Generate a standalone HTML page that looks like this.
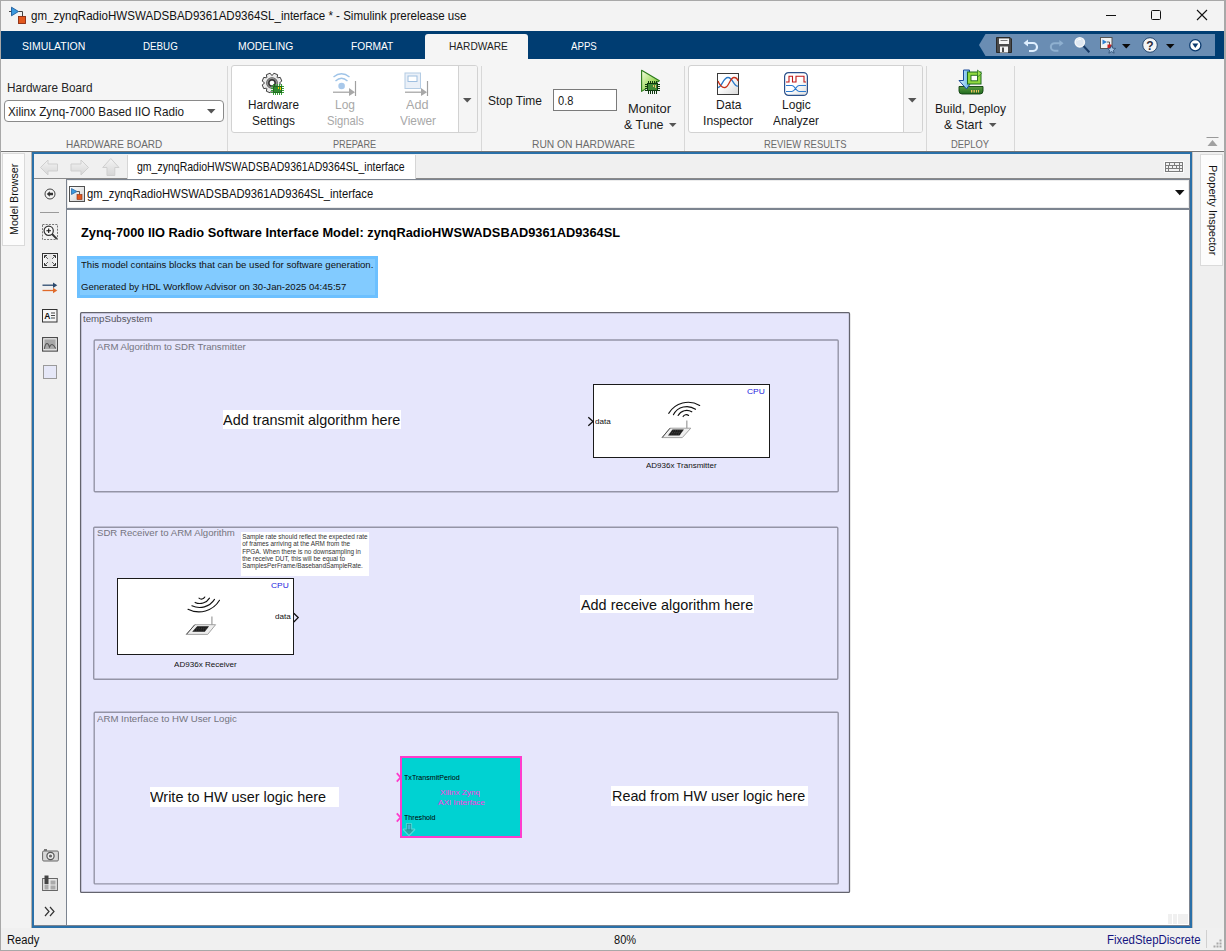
<!DOCTYPE html>
<html><head><meta charset="utf-8">
<style>
*{margin:0;padding:0;box-sizing:border-box}
html,body{width:1226px;height:951px;overflow:hidden}
body{position:relative;background:#f0f0f0;font-family:"Liberation Sans",sans-serif;color:#000}
.a{position:absolute}
.t{position:absolute;white-space:nowrap;line-height:1}
svg{position:absolute;overflow:visible}
</style></head><body>
<div class="a" style="left:0;top:0;width:1226px;height:951px;background:#f0f0f0"></div>
<div class="a" style="left:0;top:0;width:1226px;height:31px;background:#f3f3f3"></div>
<svg style="left:8px;top:6px" width="20" height="20" viewBox="0 0 20 20">
  <path d="M1 5.5 H4" stroke="#444" stroke-width="1"/>
  <path d="M3.5 1.2 L10.5 5.5 L3.5 9.8 Z" fill="#3a9ae0" stroke="#1d5a9a" stroke-width="0.9"/>
  <path d="M10.5 5.5 H14.5 V10.5" stroke="#444" stroke-width="1" fill="none"/>
  <rect x="10.5" y="10.5" width="7" height="7" fill="#e2581e" stroke="#8a2a10" stroke-width="0.9"/>
</svg>
<div class="t" style="left:31.27px;top:9.00px;font-size:13.2px;color:#111;font-weight:normal;font-family:'Liberation Sans';transform:scaleX(0.8757);transform-origin:0 0;">gm_zynqRadioHWSWADSBAD9361AD9364SL_interface * - Simulink prerelease use</div>
<div class="a" style="left:1106px;top:15px;width:10px;height:1px;background:#111"></div>
<div class="a" style="left:1151px;top:10px;width:10px;height:10px;border:1px solid #111;border-radius:1.5px"></div>
<svg style="left:1197px;top:10px" width="10" height="10" viewBox="0 0 10 10"><path d="M0 0 L10 10 M10 0 L0 10" stroke="#111" stroke-width="1.1"/></svg>
<div class="a" style="left:1px;top:31px;width:1224px;height:28px;background:#003d72"></div>
<div class="t" style="left:22.35px;top:41.00px;font-size:11.2px;color:#fff;font-weight:normal;font-family:'Liberation Sans';transform:scaleX(0.9377);transform-origin:0 0;">SIMULATION</div>
<div class="t" style="left:142.55px;top:41.00px;font-size:11.2px;color:#fff;font-weight:normal;font-family:'Liberation Sans';transform:scaleX(0.8740);transform-origin:0 0;">DEBUG</div>
<div class="t" style="left:238.05px;top:41.00px;font-size:11.2px;color:#fff;font-weight:normal;font-family:'Liberation Sans';transform:scaleX(0.9270);transform-origin:0 0;">MODELING</div>
<div class="t" style="left:350.55px;top:41.00px;font-size:11.2px;color:#fff;font-weight:normal;font-family:'Liberation Sans';transform:scaleX(0.9119);transform-origin:0 0;">FORMAT</div>
<div class="t" style="left:571.15px;top:41.00px;font-size:11.2px;color:#fff;font-weight:normal;font-family:'Liberation Sans';transform:scaleX(0.8632);transform-origin:0 0;">APPS</div>
<div class="a" style="left:425px;top:34px;width:103px;height:25px;background:#f5f5f5;border-radius:3px 3px 0 0"></div>
<div class="t" style="left:448.55px;top:41.00px;font-size:11.2px;color:#222;font-weight:normal;font-family:'Liberation Sans';transform:scaleX(0.9068);transform-origin:0 0;">HARDWARE</div>
<svg style="left:979px;top:34px" width="236" height="22" viewBox="0 0 236 22">
  <path d="M6.5 0 H236 V22 H6.5 L0 11 Z" fill="#6a8db3"/>
</svg>
<svg style="left:996px;top:37px" width="16" height="16" viewBox="0 0 16 16">
  <path d="M0.5 0.5 H14 L15.5 2 V15.5 H0.5 Z" fill="#4a4a4a" stroke="#2a2a2a" stroke-width="1"/>
  <rect x="3" y="1.5" width="10" height="5.5" fill="#f4f4f4"/>
  <rect x="4.5" y="3" width="7" height="1" fill="#777"/>
  <rect x="4" y="9.5" width="8" height="6" fill="#f4f4f4"/>
  <rect x="6" y="10.5" width="2" height="4.5" fill="#4a4a4a"/>
</svg>
<svg style="left:1023px;top:39px" width="16" height="13" viewBox="0 0 16 13">
  <path d="M3 4 H10 A4 4 0 0 1 10 12 H6" fill="none" stroke="#dfefff" stroke-width="2.2"/>
  <path d="M0.5 4 L5 0.5 V7.5 Z" fill="#dfefff"/>
</svg>
<svg style="left:1049px;top:39px" width="15" height="13" viewBox="0 0 16 13">
  <path d="M13 4 H6 A4 4 0 0 0 6 12 H10" fill="none" stroke="#8fb0d0" stroke-width="2.2"/>
  <path d="M15.5 4 L11 0.5 V7.5 Z" fill="#8fb0d0"/>
</svg>
<svg style="left:1073px;top:36px" width="18" height="18" viewBox="0 0 18 18">
  <path d="M10.3 9.8 L16.3 16.2" stroke="#173a66" stroke-width="2"/>
  <circle cx="6.8" cy="6.3" r="4.6" fill="#dfe8f2" stroke="#f4f6f8" stroke-width="1.6"/>
  <path d="M4.5 4.5 A3 3 0 0 1 8 3.5" stroke="#fff" stroke-width="1" fill="none"/>
</svg>
<svg style="left:1100px;top:37px" width="17" height="17" viewBox="0 0 17 17">
  <rect x="0.5" y="0.5" width="11.5" height="11" fill="#f2f2f2" stroke="#555" stroke-width="1"/>
  <path d="M2.5 2.5 L7 5 L2.5 7.5 Z" fill="#2f7fd0"/>
  <path d="M7 5 H9.5 V8" stroke="#333" stroke-width="0.8" fill="none"/>
  <rect x="7.5" y="7.5" width="4" height="4" fill="#d02020"/>
  <path d="M11.5 8.5 L12.7 11.2 L15.6 11.4 L13.4 13.3 L14.1 16.2 L11.5 14.6 L8.9 16.2 L9.6 13.3 L7.4 11.4 L10.3 11.2 Z" fill="#a8c8e8" stroke="#2a4a70" stroke-width="0.8"/>
</svg>
<svg style="left:1122px;top:43.5px" width="9" height="5" viewBox="0 0 9 5"><path d="M0 0 H8.5 L4.25 4.5 Z" fill="#0a0a0a"/></svg>
<svg style="left:1142px;top:37px" width="16" height="16" viewBox="0 0 16 16">
  <circle cx="8" cy="8" r="7.3" fill="#f4f4f4" stroke="#24466e" stroke-width="1"/>
  <text x="8" y="12.6" text-anchor="middle" font-family="Liberation Sans" font-weight="bold" font-size="12" fill="#2a2a3a">?</text>
</svg>
<svg style="left:1166px;top:43.5px" width="9" height="5" viewBox="0 0 9 5"><path d="M0 0 H8.5 L4.25 4.5 Z" fill="#0a0a0a"/></svg>
<svg style="left:1189px;top:38.5px" width="13" height="13" viewBox="0 0 13 13">
  <circle cx="6.3" cy="6.3" r="5.6" fill="#fff" stroke="#0b3a6e" stroke-width="1.3"/>
  <path d="M3.3 4.5 H9.3 L6.3 9 Z" fill="#0b3a6e"/>
</svg>
<div class="a" style="left:1px;top:59px;width:1224px;height:92px;background:#f5f5f5"></div>
<div class="a" style="left:1px;top:150px;width:1224px;height:1px;background:#fcfcfc"></div>
<div class="a" style="left:1px;top:151px;width:1224px;height:1px;background:#767676"></div>
<div class="a" style="left:227px;top:66px;width:1px;height:85px;background:#d8d8d8"></div>
<div class="a" style="left:481px;top:66px;width:1px;height:85px;background:#d8d8d8"></div>
<div class="a" style="left:684px;top:66px;width:1px;height:85px;background:#d8d8d8"></div>
<div class="a" style="left:926px;top:66px;width:1px;height:85px;background:#d8d8d8"></div>
<div class="a" style="left:1014px;top:66px;width:1px;height:85px;background:#d8d8d8"></div>
<div class="t" style="left:66.06px;top:139.00px;font-size:11px;color:#6b6b6b;font-weight:normal;font-family:'Liberation Sans';transform:scaleX(0.9090);transform-origin:0 0;">HARDWARE BOARD</div>
<div class="t" style="left:333.16px;top:139.00px;font-size:11px;color:#6b6b6b;font-weight:normal;font-family:'Liberation Sans';transform:scaleX(0.8332);transform-origin:0 0;">PREPARE</div>
<div class="t" style="left:531.56px;top:139.00px;font-size:11px;color:#6b6b6b;font-weight:normal;font-family:'Liberation Sans';transform:scaleX(0.9329);transform-origin:0 0;">RUN ON HARDWARE</div>
<div class="t" style="left:764.16px;top:139.00px;font-size:11px;color:#6b6b6b;font-weight:normal;font-family:'Liberation Sans';transform:scaleX(0.8566);transform-origin:0 0;">REVIEW RESULTS</div>
<div class="t" style="left:951.36px;top:139.00px;font-size:11px;color:#6b6b6b;font-weight:normal;font-family:'Liberation Sans';transform:scaleX(0.8546);transform-origin:0 0;">DEPLOY</div>
<div class="t" style="left:6.90px;top:82.00px;font-size:12.6px;color:#262626;font-weight:normal;font-family:'Liberation Sans';transform:scaleX(0.9328);transform-origin:0 0;">Hardware Board</div>
<div class="a" style="left:4px;top:100px;width:220px;height:22px;background:#fff;border:1px solid #8a8a8a;border-radius:4px"></div>
<div class="t" style="left:8.30px;top:106.00px;font-size:12.6px;color:#1a1a1a;font-weight:normal;font-family:'Liberation Sans';transform:scaleX(0.9284);transform-origin:0 0;">Xilinx Zynq-7000 Based IIO Radio</div>
<svg style="left:207px;top:109px" width="9" height="5" viewBox="0 0 9 5"><path d="M0 0 H8.5 L4.25 4.5 Z" fill="#555"/></svg>
<div class="a" style="left:231px;top:65px;width:247px;height:68px;background:#fff;border:1px solid #d2d2d2;border-radius:3px"></div>
<div class="a" style="left:458px;top:66px;width:19px;height:66px;background:#f5f5f5;border-left:1px solid #d2d2d2;border-radius:0 2px 2px 0"></div>
<svg style="left:463px;top:98px" width="9" height="5" viewBox="0 0 9 5"><path d="M0 0 H8.5 L4.25 4.5 Z" fill="#555"/></svg>
<svg style="left:262px;top:73px" width="20" height="20" viewBox="0 0 20 20">
  <defs><radialGradient id="gg" cx="50%" cy="50%" r="50%"><stop offset="0.3" stop-color="#777"/><stop offset="0.55" stop-color="#222"/><stop offset="0.8" stop-color="#999"/><stop offset="1" stop-color="#333"/></radialGradient></defs>
  <polygon points="10.25,2.40 11.92,0.19 15.59,1.71 15.20,4.45 15.55,4.80 18.29,4.41 19.81,8.08 17.60,9.75 17.60,10.25 19.81,11.92 18.29,15.59 15.55,15.20 15.20,15.55 15.59,18.29 11.92,19.81 10.25,17.60 9.75,17.60 8.08,19.81 4.41,18.29 4.80,15.55 4.45,15.20 1.71,15.59 0.19,11.92 2.40,10.25 2.40,9.75 0.19,8.08 1.71,4.41 4.45,4.80 4.80,4.45 4.41,1.71 8.08,0.19 9.75,2.40" fill="#ececec" stroke="#2a2a2a" stroke-width="0.9" stroke-linejoin="round"/>
  <circle cx="10" cy="10" r="5.8" fill="url(#gg)"/>
  <circle cx="10" cy="10" r="2.3" fill="#fff"/>
</svg>
<svg style="left:0;top:0" width="1" height="1">
  <g fill="#35a035">
  <rect x="273" y="84" width="1" height="2"/><rect x="275" y="84" width="1" height="2"/><rect x="277" y="84" width="1" height="2"/><rect x="279" y="84" width="1" height="2"/><rect x="281" y="84" width="1" height="2"/>
  <rect x="273" y="93" width="1" height="2"/><rect x="275" y="93" width="1" height="2"/><rect x="277" y="93" width="1" height="2"/><rect x="279" y="93" width="1" height="2"/><rect x="281" y="93" width="1" height="2"/>
  <rect x="271" y="86" width="2" height="1"/><rect x="271" y="88" width="2" height="1"/><rect x="271" y="90" width="2" height="1"/><rect x="271" y="92" width="2" height="1"/>
  <rect x="282" y="86" width="2" height="1"/><rect x="282" y="88" width="2" height="1"/><rect x="282" y="90" width="2" height="1"/><rect x="282" y="92" width="2" height="1"/>
  </g>
  <rect x="273" y="86" width="9" height="7" fill="#1f6a1f"/>
  <rect x="274" y="87" width="7" height="5" fill="#2e8a2e"/>
  <rect x="278" y="87" width="1" height="2" fill="#f5d000"/><rect x="280" y="87" width="1" height="3" fill="#f5d000"/>
</svg>
<div class="t" style="left:247.50px;top:99.00px;font-size:12.6px;color:#1a1a1a;font-weight:normal;font-family:'Liberation Sans';transform:scaleX(0.9331);transform-origin:0 0;">Hardware</div>
<div class="t" style="left:251.50px;top:115.00px;font-size:12.6px;color:#1a1a1a;font-weight:normal;font-family:'Liberation Sans';transform:scaleX(0.9437);transform-origin:0 0;">Settings</div>
<svg style="left:332px;top:72px" width="25" height="25" viewBox="0 0 25 25">
  <path d="M1.5 5 Q9.5 -1.5 17.5 5" fill="none" stroke="#9fc4e8" stroke-width="1.4"/>
  <path d="M3.5 9 Q9.5 3.5 15.5 9" fill="none" stroke="#9fc4e8" stroke-width="1.4"/>
  <circle cx="9.6" cy="14" r="3.3" fill="#a8c8ea"/>
  <path d="M1 20.2 H18" stroke="#a0a0a0" stroke-width="1.2"/>
  <path d="M17 16 L23 20.2 L17 24 Z" fill="#a8a8a8"/>
  <path d="M23.5 9 V24" stroke="#a0a0a0" stroke-width="1.2"/>
</svg>
<div class="t" style="left:334.50px;top:99.00px;font-size:12.6px;color:#a8a8a8;font-weight:normal;font-family:'Liberation Sans';transform:scaleX(0.9496);transform-origin:0 0;">Log</div>
<div class="t" style="left:326.50px;top:115.00px;font-size:12.6px;color:#a8a8a8;font-weight:normal;font-family:'Liberation Sans';transform:scaleX(0.8932);transform-origin:0 0;">Signals</div>
<svg style="left:404px;top:72px" width="25" height="25" viewBox="0 0 25 25">
  <rect x="1" y="1" width="15.5" height="15.5" fill="#eaf0f8" stroke="#b4cce4" stroke-width="1"/>
  <rect x="4" y="4" width="9" height="5.5" fill="#fff" stroke="#9fbfe0" stroke-width="1"/>
  <path d="M1 20.2 H18" stroke="#a0a0a0" stroke-width="1.2"/>
  <path d="M17 16 L23 20.2 L17 24 Z" fill="#a8a8a8"/>
  <path d="M23.5 9 V24" stroke="#a0a0a0" stroke-width="1.2"/>
</svg>
<div class="t" style="left:405.50px;top:99.00px;font-size:12.6px;color:#a8a8a8;font-weight:normal;font-family:'Liberation Sans';transform:scaleX(1.0040);transform-origin:0 0;">Add</div>
<div class="t" style="left:399.50px;top:115.00px;font-size:12.6px;color:#a8a8a8;font-weight:normal;font-family:'Liberation Sans';transform:scaleX(0.9390);transform-origin:0 0;">Viewer</div>
<div class="t" style="left:487.50px;top:95.00px;font-size:12.6px;color:#1a1a1a;font-weight:normal;font-family:'Liberation Sans';transform:scaleX(0.9516);transform-origin:0 0;">Stop Time</div>
<div class="a" style="left:553px;top:89px;width:64px;height:22px;background:#fff;border:1px solid #7a7a7a"></div>
<div class="t" style="left:557.50px;top:95.00px;font-size:12.6px;color:#1a1a1a;font-weight:normal;font-family:'Liberation Sans';transform:scaleX(0.8784);transform-origin:0 0;">0.8</div>
<svg style="left:0;top:0" width="1" height="1">
  <defs><linearGradient id="mg" x1="0" y1="0" x2="1" y2="1"><stop offset="0" stop-color="#f4ffe0"/><stop offset="0.6" stop-color="#9fd860"/><stop offset="1" stop-color="#5aa830"/></linearGradient></defs>
  <path d="M641.6 70.2 L659.4 80.8 L641.6 91.4 Z" fill="url(#mg)" stroke="#2a7a1a" stroke-width="1.1" stroke-linejoin="round"/>
  <g fill="#0f3a0f">
  <rect x="648" y="81" width="1" height="2"/><rect x="650" y="81" width="1" height="2"/><rect x="652" y="81" width="1" height="2"/><rect x="654" y="81" width="1" height="2"/><rect x="656" y="81" width="1" height="2"/>
  <rect x="648" y="91" width="1" height="3"/><rect x="650" y="91" width="1" height="3"/><rect x="652" y="91" width="1" height="3"/><rect x="654" y="91" width="1" height="3"/><rect x="656" y="91" width="1" height="3"/>
  <rect x="645" y="84" width="2" height="1"/><rect x="645" y="86" width="2" height="1"/><rect x="645" y="88" width="2" height="1"/><rect x="645" y="90" width="2" height="1"/>
  <rect x="658" y="84" width="2" height="1"/><rect x="658" y="86" width="2" height="1"/><rect x="658" y="88" width="2" height="1"/><rect x="658" y="90" width="2" height="1"/>
  <rect x="647" y="83" width="11" height="8"/>
  </g>
  <rect x="648" y="84" width="9" height="6" fill="#3f8a34"/>
  <rect x="653" y="85" width="1" height="2" fill="#f5c070"/><rect x="655" y="85" width="1" height="3" fill="#f5c070"/>
</svg>
<div class="t" style="left:628.10px;top:103.00px;font-size:12.6px;color:#1a1a1a;font-weight:normal;font-family:'Liberation Sans';transform:scaleX(1.0246);transform-origin:0 0;">Monitor</div>
<div class="t" style="left:623.50px;top:119.00px;font-size:12.6px;color:#1a1a1a;font-weight:normal;font-family:'Liberation Sans';transform:scaleX(0.9894);transform-origin:0 0;">&amp; Tune</div>
<svg style="left:669px;top:123px" width="8" height="5" viewBox="0 0 8 5"><path d="M0 0 H7.5 L3.75 4 Z" fill="#555"/></svg>
<div class="a" style="left:688px;top:65px;width:235px;height:68px;background:#fff;border:1px solid #d2d2d2;border-radius:3px"></div>
<div class="a" style="left:903px;top:66px;width:19px;height:66px;background:#f5f5f5;border-left:1px solid #d2d2d2;border-radius:0 2px 2px 0"></div>
<svg style="left:908px;top:98px" width="9" height="5" viewBox="0 0 9 5"><path d="M0 0 H8.5 L4.25 4.5 Z" fill="#555"/></svg>
<svg style="left:717px;top:73px" width="22" height="22" viewBox="0 0 22 22">
  <defs><linearGradient id="dg" x1="0" y1="0" x2="1" y2="1"><stop offset="0.4" stop-color="#fff"/><stop offset="1" stop-color="#d8d8d8"/></linearGradient></defs>
  <rect x="0.5" y="0.5" width="21" height="21" fill="url(#dg)" stroke="#3a3a3a" stroke-width="1"/>
  <path d="M1 14.5 C5 14.5 6 4.5 11 4.5 C16 4.5 17 14.5 21 13" fill="none" stroke="#2a78c8" stroke-width="1.3"/>
  <path d="M1 8 C3 13 5 15 8 14.5 C12 14 13 4.5 17 4.5 C19 4.5 20.5 6 21 8" fill="none" stroke="#c83018" stroke-width="1.3"/>
</svg>
<div class="t" style="left:715.50px;top:99.00px;font-size:12.6px;color:#1a1a1a;font-weight:normal;font-family:'Liberation Sans';transform:scaleX(0.9570);transform-origin:0 0;">Data</div>
<div class="t" style="left:703.10px;top:115.00px;font-size:12.6px;color:#1a1a1a;font-weight:normal;font-family:'Liberation Sans';transform:scaleX(0.9664);transform-origin:0 0;">Inspector</div>
<svg style="left:784px;top:72px" width="24" height="24" viewBox="0 0 24 24">
  <defs><linearGradient id="lg" x1="0" y1="0" x2="1" y2="1"><stop offset="0.5" stop-color="#fff"/><stop offset="1" stop-color="#dcdcdc"/></linearGradient></defs>
  <rect x="0.6" y="0.6" width="22.8" height="22.8" rx="4" fill="url(#lg)" stroke="#2a4f8a" stroke-width="1.2"/>
  <path d="M2 10 H5 V4.3 H8.5 V10 H12 V4.3 H20 V10 H22" fill="none" stroke="#c01818" stroke-width="1.1"/>
  <path d="M2 13.5 H8 C11 13.5 12 19.5 15 19.5 H22 M2 19.5 H8 C11 19.5 12 13.5 15 13.5 H22" fill="none" stroke="#2a7ad0" stroke-width="1.1"/>
</svg>
<div class="t" style="left:781.50px;top:99.00px;font-size:12.6px;color:#1a1a1a;font-weight:normal;font-family:'Liberation Sans';transform:scaleX(0.9553);transform-origin:0 0;">Logic</div>
<div class="t" style="left:773.20px;top:115.00px;font-size:12.6px;color:#1a1a1a;font-weight:normal;font-family:'Liberation Sans';transform:scaleX(0.9377);transform-origin:0 0;">Analyzer</div>
<svg style="left:958px;top:69px" width="26" height="26" viewBox="0 0 26 26">
  <defs><linearGradient id="bg1" x1="0" y1="0" x2="0" y2="1"><stop offset="0" stop-color="#5a9a40"/><stop offset="1" stop-color="#1f6a1f"/></linearGradient>
  <linearGradient id="bl1" x1="0" y1="0" x2="1" y2="0"><stop offset="0" stop-color="#e0f4ff"/><stop offset="1" stop-color="#3aa0e0"/></linearGradient></defs>
  <path d="M1 17.5 H25 V22 Q25 25 22 25 H4 Q1 25 1 22 Z" fill="url(#bg1)" stroke="#0f3f0f" stroke-width="0.9"/>
  <rect x="13" y="21" width="1.3" height="2.5" fill="#f0c060"/><rect x="15.5" y="21" width="1.3" height="2.5" fill="#f0c060"/><rect x="18" y="21" width="1" height="2.5" fill="#f0c060"/><rect x="20" y="21" width="1" height="2.5" fill="#f0c060"/>
  <path d="M5.5 1 H11.5 V11.5 H14.5 L8.5 20 L1 11.5 H5.5 Z" fill="url(#bl1)" stroke="#1a4a9a" stroke-width="1"/>
  <rect x="9.5" y="3" width="13.5" height="12" fill="#8fd840" stroke="#1f6a1f" stroke-width="1"/>
  <rect x="13" y="6.3" width="6.5" height="5.5" fill="#fff" stroke="#1f6a1f" stroke-width="0.9"/>
  <path d="M19.5 1 L23.5 4.5 L19.5 8 Z" fill="#9fe050" stroke="#1f6a1f" stroke-width="0.7"/>
</svg>
<div class="t" style="left:934.50px;top:103.00px;font-size:12.6px;color:#1a1a1a;font-weight:normal;font-family:'Liberation Sans';transform:scaleX(0.9561);transform-origin:0 0;">Build, Deploy</div>
<div class="t" style="left:944.30px;top:119.00px;font-size:12.6px;color:#1a1a1a;font-weight:normal;font-family:'Liberation Sans';transform:scaleX(0.9922);transform-origin:0 0;">&amp; Start</div>
<svg style="left:989px;top:123px" width="8" height="5" viewBox="0 0 8 5"><path d="M0 0 H7.5 L3.75 4 Z" fill="#555"/></svg>
<svg style="left:1206px;top:137px" width="13" height="10" viewBox="0 0 13 10"><path d="M0.5 0.5 H12.5" stroke="#999" stroke-width="1"/><path d="M1.5 9 L6.5 3 L11.5 9 Z" fill="#a0a0a0"/></svg>
<div class="a" style="left:1px;top:152px;width:31px;height:776px;background:#f3f3f3"></div>
<div class="a" style="left:1193px;top:152px;width:32px;height:776px;background:#efefef"></div>
<div class="a" style="left:31px;top:152px;width:1px;height:776px;background:#b4b0ac"></div>
<div class="a" style="left:1192px;top:152px;width:1px;height:776px;background:#c8c4c0"></div>
<div class="a" style="left:32px;top:152px;width:1160px;height:776px;border:2px solid #2a70a8;background:#f0f0f0"></div>
<div class="a" style="left:2px;top:153px;width:23px;height:93px;background:#fcfcfc;border:1px solid #dadada"></div>
<div class="a" style="left:1200px;top:154px;width:23px;height:112px;background:#fcfcfc;border:1px solid #dadada"></div>
<div class="a" style="left:34px;top:178px;width:1156px;height:1px;background:#8a8a8a"></div>
<div class="a" style="left:66px;top:179px;width:1124px;height:1px;background:#7c8490"></div>
<div class="a" style="left:127px;top:155px;width:289px;height:24px;background:#fff;border-left:1px solid #d6d6d6;border-right:1px solid #d6d6d6"></div>
<svg style="left:40px;top:159px" width="82" height="18" viewBox="0 0 82 18">
  <defs><linearGradient id="ag" x1="0" y1="0" x2="0" y2="1"><stop offset="0" stop-color="#f4f4f4"/><stop offset="1" stop-color="#d6d6d6"/></linearGradient></defs>
  <path d="M0.5 8.5 L8 1 V5 H17.5 V12 H8 V16 Z" fill="url(#ag)" stroke="#cfcfcf" stroke-width="1"/>
  <path d="M48.5 8.5 L41 1 V5 H31 V12 H41 V16 Z" fill="url(#ag)" stroke="#cfcfcf" stroke-width="1"/>
  <path d="M70.8 -0.5 L79 8.5 H74.8 V16.5 H67 V8.5 H62.7 Z" fill="url(#ag)" stroke="#cfcfcf" stroke-width="1"/>
</svg>
<div class="t" style="left:137.31px;top:161.00px;font-size:12.2px;color:#111;font-weight:normal;font-family:'Liberation Sans';transform:scaleX(0.8620);transform-origin:0 0;">gm_zynqRadioHWSWADSBAD9361AD9364SL_interface</div>
<svg style="left:0;top:0" width="1" height="1">
  <rect x="1164" y="161" width="20" height="12" fill="#fbfbfb"/>
  <rect x="1165" y="162" width="18" height="10" fill="#7c7c7c"/>
  <g fill="#f2f2f2">
  <rect x="1166" y="163" width="3" height="2"/><rect x="1170" y="163" width="4" height="2"/><rect x="1175" y="163" width="4" height="2"/><rect x="1180" y="163" width="2" height="2"/>
  <rect x="1166" y="166" width="2" height="2"/><rect x="1169" y="166" width="3" height="2"/><rect x="1173" y="166" width="3" height="2"/><rect x="1177" y="166" width="2" height="2"/><rect x="1180" y="166" width="2" height="2"/>
  <rect x="1166" y="169" width="2" height="2"/><rect x="1169" y="169" width="10" height="2"/><rect x="1180" y="169" width="2" height="2"/>
  </g>
</svg>
<div class="a" style="left:67px;top:180px;width:1122px;height:28px;background:#fff;border:1px solid #ececec"></div>
<div class="a" style="left:66px;top:208px;width:1124px;height:2px;background:#7c8490"></div>
<svg style="left:69px;top:186px" width="16" height="16" viewBox="0 0 16 16">
  <defs><linearGradient id="ig" x1="0" y1="0" x2="1" y2="1"><stop offset="0" stop-color="#fff"/><stop offset="1" stop-color="#d0d0d0"/></linearGradient></defs>
  <rect x="0.5" y="0.5" width="15" height="15" fill="url(#ig)" stroke="#505050" stroke-width="1"/>
  <path d="M2.5 2.5 L8 5.5 L2.5 8.5 Z" fill="#3a9ae0" stroke="#1d5a9a" stroke-width="0.7"/>
  <path d="M8 5.5 H10.5 V8.5" stroke="#333" stroke-width="0.8" fill="none"/>
  <rect x="8" y="8.5" width="5" height="5" fill="#e2581e" stroke="#8a2a10" stroke-width="0.6"/>
</svg>
<div class="t" style="left:86.91px;top:188.00px;font-size:12.2px;color:#111;font-weight:normal;font-family:'Liberation Sans';transform:scaleX(0.9218);transform-origin:0 0;">gm_zynqRadioHWSWADSBAD9361AD9364SL_interface</div>
<svg style="left:1175px;top:190px" width="10" height="6" viewBox="0 0 10 6"><path d="M0 0 H9.5 L4.75 5.2 Z" fill="#111"/></svg>
<div class="a" style="left:66px;top:179px;width:1px;height:747px;background:#7c8490"></div>
<svg style="left:44px;top:188px" width="12" height="12" viewBox="0 0 12 12">
  <circle cx="6" cy="6" r="5" fill="#f4f4f4" stroke="#444" stroke-width="1"/>
  <path d="M2.8 6 L5.8 3.3 V4.8 H9 V7.2 H5.8 V8.7 Z" fill="#333"/>
</svg>
<div class="a" style="left:40px;top:212px;width:19px;height:1px;background:#9a9a9a"></div>
<svg style="left:42px;top:224px" width="17" height="17" viewBox="0 0 17 17">
  <rect x="0.5" y="0.5" width="15" height="15" fill="none" stroke="#777" stroke-width="1" stroke-dasharray="2 1.2"/>
  <circle cx="6.7" cy="6.7" r="4.6" fill="#fafafa" stroke="#333" stroke-width="1.2"/>
  <path d="M4.4 6.7 H9 M6.7 4.4 V9" stroke="#111" stroke-width="1.1"/>
  <path d="M10 10 L14.8 14.8" stroke="#333" stroke-width="1.8"/>
</svg>
<svg style="left:42px;top:253px" width="16" height="15" viewBox="0 0 16 15">
  <defs><linearGradient id="fg" x1="0" y1="0" x2="1" y2="0"><stop offset="0" stop-color="#fafafa"/><stop offset="0.5" stop-color="#e4e4e4"/><stop offset="1" stop-color="#fafafa"/></linearGradient></defs>
  <rect x="0.5" y="0.5" width="15" height="14" fill="url(#fg)" stroke="#333" stroke-width="1"/>
  <path d="M3 3 L6 6 M13 3 L10 6 M3 12 L6 9 M13 12 L10 9" stroke="#444" stroke-width="0.8"/>
  <path d="M2.5 5 V2.5 H5 M11 2.5 H13.5 V5 M2.5 10 V12.5 H5 M11 12.5 H13.5 V10" fill="none" stroke="#333" stroke-width="1"/>
</svg>
<svg style="left:42px;top:282px" width="16" height="11" viewBox="0 0 16 11">
  <path d="M0.5 3.2 H12" stroke="#2c4a6e" stroke-width="1.3"/><path d="M11 0.5 L15.3 3.2 L11 5.9 Z" fill="#2c4a6e"/>
  <path d="M0.5 8.5 H12" stroke="#e06a2a" stroke-width="1.3"/><path d="M11 5.8 L15.3 8.5 L11 11.2 Z" fill="#e06a2a"/>
</svg>
<svg style="left:42px;top:309px" width="16" height="14" viewBox="0 0 16 14">
  <rect x="0.5" y="0.5" width="14.5" height="12.5" fill="#f6f6f6" stroke="#333" stroke-width="1"/>
  <text x="2.3" y="10" font-family="Liberation Sans" font-weight="bold" font-size="8.5" fill="#111">A</text>
  <path d="M9 4 H13 M9 6.5 H13 M9 9 H13" stroke="#333" stroke-width="0.9"/>
</svg>
<svg style="left:42px;top:337px" width="16" height="15" viewBox="0 0 16 15">
  <rect x="0.6" y="0.6" width="14.8" height="13.5" fill="#f4f4f4" stroke="#444" stroke-width="1.1"/>
  <rect x="2.3" y="2.3" width="11.4" height="10" fill="#a8a8a8"/>
  <path d="M2.3 12 C3.5 5 6 5 7.5 10 C9 6.5 11 6.5 13.7 11.5" fill="none" stroke="#555" stroke-width="1.1"/>
</svg>
<div class="a" style="left:43px;top:365px;width:14px;height:14px;background:#e6e8f8;border:1px solid #9a9a9a"></div>
<svg style="left:42px;top:848px" width="17" height="14" viewBox="0 0 17 14">
  <rect x="0.6" y="3" width="15.8" height="10" rx="1.2" fill="#d8d8d8" stroke="#666" stroke-width="1"/>
  <rect x="2" y="1" width="3" height="2" fill="#777"/>
  <circle cx="8.5" cy="8" r="3.6" fill="#eee" stroke="#555" stroke-width="1.2"/>
  <circle cx="8.5" cy="8" r="1.6" fill="#666"/>
</svg>
<svg style="left:42px;top:875px" width="16" height="16" viewBox="0 0 16 16">
  <rect x="0.6" y="3.5" width="14.8" height="12" fill="#e8e8e8" stroke="#666" stroke-width="1"/>
  <rect x="2.5" y="0.5" width="4" height="8.5" fill="#444"/>
  <rect x="2.5" y="9.5" width="4" height="5" fill="#aaa"/>
  <rect x="8.5" y="5.5" width="5" height="4" fill="#aaa"/><rect x="8.5" y="10.5" width="5" height="4" fill="#aaa"/>
</svg>
<svg style="left:44px;top:906px" width="12" height="11" viewBox="0 0 12 11">
  <path d="M1 1 L5 5.5 L1 10 M6 1 L10 5.5 L6 10" fill="none" stroke="#333" stroke-width="1.2"/>
</svg>
<div class="a" style="left:67px;top:210px;width:1122px;height:715px;background:#fff"></div>
<div class="a" style="left:34px;top:925px;width:1156px;height:1px;background:#7c8490"></div>
<div class="a" style="left:1189px;top:179px;width:1px;height:747px;background:#7c8490"></div>
<div class="a" style="left:1168px;top:914px;width:4px;height:10px;background:#f0f0f0"></div>
<div class="a" style="left:1173px;top:914px;width:4px;height:10px;background:#f0f0f0"></div>
<div class="a" style="left:1178px;top:914px;width:10px;height:10px;background:#f0f0f0"></div>
<div class="t" style="left:6.81px;top:934.00px;font-size:12.3px;color:#111;font-weight:normal;font-family:'Liberation Sans';transform:scaleX(0.9085);transform-origin:0 0;">Ready</div>
<div class="t" style="left:613.82px;top:934.00px;font-size:12px;color:#111;font-weight:normal;font-family:'Liberation Sans';transform:scaleX(0.9189);transform-origin:0 0;">80%</div>
<div class="t" style="left:1106.90px;top:934.00px;font-size:12.6px;color:#141480;font-weight:normal;font-family:'Liberation Sans';transform:scaleX(0.9089);transform-origin:0 0;">FixedStepDiscrete</div>
<div class="a" style="left:1206px;top:930px;width:1px;height:18px;background:#d0d0d0"></div>
<svg style="left:1213px;top:939px" width="10" height="10" viewBox="0 0 10 10" fill="#a8a8a8">
  <rect x="6.5" y="0.5" width="2" height="2"/><rect x="3.5" y="3.5" width="2" height="2"/><rect x="6.5" y="3.5" width="2" height="2"/>
  <rect x="0.5" y="6.5" width="2" height="2"/><rect x="3.5" y="6.5" width="2" height="2"/><rect x="6.5" y="6.5" width="2" height="2"/>
</svg>
<div class="a" style="left:0;top:0;width:1226px;height:951px;border:1px solid #a8a8a8;border-right-width:2px;pointer-events:none"></div>
<div class="t" style="left:8.5px;top:234.7px;font-size:11.2px;color:#111;transform:rotate(-90deg) scaleX(0.955);transform-origin:0 0">Model Browser</div>
<div class="t" style="left:1217.7px;top:164.9px;font-size:11.4px;color:#111;transform:rotate(90deg) scaleX(0.972);transform-origin:0 0">Property Inspector</div>
<div class="t" style="left:80.89px;top:227.00px;font-size:12.8px;color:#000;font-weight:bold;font-family:'Liberation Sans';transform:scaleX(1.0014);transform-origin:0 0;">Zynq-7000 IIO Radio Software Interface Model: zynqRadioHWSWADSBAD9361AD9364SL</div>
<div class="a" style="left:77px;top:255.5px;width:301px;height:42.5px;background:#82cbff;border:3px solid #6cc0ff"></div>
<div class="t" style="left:80.52px;top:260.00px;font-size:9.6px;color:#111;font-weight:normal;font-family:'Liberation Sans';transform:scaleX(1.0004);transform-origin:0 0;">This model contains blocks that can be used for software generation.</div>
<div class="t" style="left:80.52px;top:282.00px;font-size:9.6px;color:#111;font-weight:normal;font-family:'Liberation Sans';transform:scaleX(0.9988);transform-origin:0 0;">Generated by HDL Workflow Advisor on 30-Jan-2025 04:45:57</div>
<svg style="left:0;top:0" width="1" height="1"><rect x="80.6" y="312.7" width="768.90" height="579.70" rx="1" fill="#e6e6fc" stroke="#64646e" stroke-width="1.3"/></svg>
<div class="t" style="left:83.42px;top:314.00px;font-size:9.6px;color:#55555e;font-weight:normal;font-family:'Liberation Sans';transform:scaleX(1.0069);transform-origin:0 0;">tempSubsystem</div>
<svg style="left:0;top:0" width="1" height="1"><rect x="94.2" y="340" width="744.00" height="151.70" rx="1" fill="none" stroke="#9494a6" stroke-width="1.4"/></svg>
<div class="t" style="left:96.92px;top:342.00px;font-size:9.6px;color:#74747e;font-weight:normal;font-family:'Liberation Sans';transform:scaleX(1.0037);transform-origin:0 0;">ARM Algorithm to SDR Transmitter</div>
<svg style="left:0;top:0" width="1" height="1"><rect x="93.7" y="527.3" width="744.10" height="152.00" rx="1" fill="none" stroke="#9494a6" stroke-width="1.4"/></svg>
<div class="t" style="left:96.52px;top:528.00px;font-size:9.6px;color:#74747e;font-weight:normal;font-family:'Liberation Sans';transform:scaleX(1.0022);transform-origin:0 0;">SDR Receiver to ARM Algorithm</div>
<svg style="left:0;top:0" width="1" height="1"><rect x="94.2" y="712.3" width="744.00" height="171.60" rx="1" fill="none" stroke="#9494a6" stroke-width="1.4"/></svg>
<div class="t" style="left:96.62px;top:714.00px;font-size:9.6px;color:#74747e;font-weight:normal;font-family:'Liberation Sans';transform:scaleX(1.0044);transform-origin:0 0;">ARM Interface to HW User Logic</div>
<div class="a" style="left:222.7px;top:410.4px;width:178.7px;height:18.3px;background:#fff"></div>
<div class="t" style="left:223.22px;top:413.00px;font-size:14.4px;color:#111;font-weight:normal;font-family:'Liberation Sans';transform:scaleX(1.0033);transform-origin:0 0;">Add transmit algorithm here</div>
<div class="a" style="left:580.1px;top:595.3px;width:173.9px;height:18.2px;background:#fff"></div>
<div class="t" style="left:581.02px;top:598.00px;font-size:14.4px;color:#111;font-weight:normal;font-family:'Liberation Sans';transform:scaleX(1.0010);transform-origin:0 0;">Add receive algorithm here</div>
<div class="a" style="left:150px;top:787px;width:188.9px;height:19.8px;background:#fff"></div>
<div class="t" style="left:150.42px;top:790.00px;font-size:14.4px;color:#111;font-weight:normal;font-family:'Liberation Sans';transform:scaleX(1.0027);transform-origin:0 0;">Write to HW user logic here</div>
<div class="a" style="left:611.2px;top:786.3px;width:196.4px;height:19.7px;background:#fff"></div>
<div class="t" style="left:611.62px;top:789.00px;font-size:14.4px;color:#111;font-weight:normal;font-family:'Liberation Sans';transform:scaleX(0.9990);transform-origin:0 0;">Read from HW user logic here</div>
<div class="a" style="left:593px;top:383.5px;width:177px;height:74px;background:#fff;border:1.2px solid #1a1a1a"></div>
<div class="t" style="left:746.88px;top:388.00px;font-size:8px;color:#2222dd;font-weight:normal;font-family:'Liberation Sans';transform:scaleX(1.0523);transform-origin:0 0;">CPU</div>
<div class="t" style="left:595.18px;top:418.00px;font-size:8px;color:#111;font-weight:normal;font-family:'Liberation Sans';transform:scaleX(1.0108);transform-origin:0 0;">data</div>
<svg style="left:0;top:0" width="1" height="1"><path d="M588.3 417.2 L593 421.5 L588.3 425.8" fill="none" stroke="#111" stroke-width="1.3"/></svg>
<svg style="left:0;top:0" width="1" height="1">
  <g fill="none" stroke="#111" stroke-width="1.1" stroke-linecap="round">
  <path d="M668.7 413.4 A22.7 22.7 0 0 1 699.7 405.5"/>
  <path d="M673.4 414.7 A15.3 15.3 0 0 1 695.5 409.3"/>
  <path d="M678.1 415.5 A9.8 9.8 0 0 1 691.8 411.8"/>
  <path d="M683.1 416.6 A3.5 3.5 0 0 1 688.6 415.5"/>
  </g>
  <path d="M686.8 420.5 V428.6" stroke="#aaa" stroke-width="1.4"/>
  <path d="M670 428.2 H690.8 L682.3 437.6 H662.1 Z" fill="#eee" stroke="#999" stroke-width="0.9"/>
  <path d="M662.1 437.6 L670 428.2" stroke="#333" stroke-width="0.8"/>
  <path d="M672.5 429.4 H683.9 L679.5 435.5 H668 Z" fill="#1a1a1a"/><path d="M671.5 430.8 H682.8 M670.3 432.4 H681.6 M669.1 434 H680.5" stroke="#777" stroke-width="0.5" stroke-dasharray="0.9 0.9"/>
</svg>
<div class="t" style="left:645.68px;top:462.00px;font-size:8px;color:#111;font-weight:normal;font-family:'Liberation Sans';transform:scaleX(0.9991);transform-origin:0 0;">AD936x Transmitter</div>
<div class="a" style="left:117.3px;top:577.7px;width:177px;height:77.5px;background:#fff;border:1.2px solid #1a1a1a"></div>
<div class="t" style="left:271.08px;top:582.00px;font-size:8px;color:#2222dd;font-weight:normal;font-family:'Liberation Sans';transform:scaleX(1.0461);transform-origin:0 0;">CPU</div>
<div class="t" style="left:274.98px;top:613.00px;font-size:8px;color:#111;font-weight:normal;font-family:'Liberation Sans';transform:scaleX(1.0108);transform-origin:0 0;">data</div>
<svg style="left:0;top:0" width="1" height="1"><path d="M293.8 613.2 L298.2 617.6 L293.8 622" fill="none" stroke="#111" stroke-width="1.3"/></svg>
<svg style="left:0;top:0" width="1" height="1">
  <g fill="none" stroke="#111" stroke-width="1.1" stroke-linecap="round">
  <path d="M199 598.1 A3.7 3.7 0 0 0 204.8 597.1"/>
  <path d="M195.1 602.4 A11.2 11.2 0 0 0 209.5 598.1"/>
  <path d="M191.9 605.8 A17.8 17.8 0 0 0 214.5 599.4"/>
  <path d="M188 609.2 A24 24 0 0 0 219.5 600.3"/>
  </g>
  <path d="M211.9 616.5 V625" stroke="#aaa" stroke-width="1.4"/>
  <path d="M194.8 624.7 H215.6 L207.7 634.4 H186.4 Z" fill="#eee" stroke="#999" stroke-width="0.9"/>
  <path d="M186.4 634.4 L194.8 624.7" stroke="#333" stroke-width="0.8"/>
  <path d="M197.2 626.3 H209 L204.8 631.8 H192.2 Z" fill="#1a1a1a"/><path d="M195.6 628.2 H207.3 M194.2 630 H206" stroke="#777" stroke-width="0.5" stroke-dasharray="0.9 0.9"/>
</svg>
<div class="t" style="left:173.68px;top:661.00px;font-size:8px;color:#111;font-weight:normal;font-family:'Liberation Sans';transform:scaleX(1.0080);transform-origin:0 0;">AD936x Receiver</div>
<div class="a" style="left:241px;top:532px;width:128.3px;height:43.6px;background:#fff"></div>
<div class="t" style="left:242.14px;top:534.00px;font-size:6.4px;color:#333;font-weight:normal;font-family:'Liberation Sans';">Sample rate should reflect the expected rate</div>
<div class="t" style="left:242.14px;top:541.00px;font-size:6.4px;color:#333;font-weight:normal;font-family:'Liberation Sans';">of frames arriving at the ARM from the</div>
<div class="t" style="left:242.14px;top:549.00px;font-size:6.4px;color:#333;font-weight:normal;font-family:'Liberation Sans';">FPGA. When there is no downsampling in</div>
<div class="t" style="left:242.14px;top:556.00px;font-size:6.4px;color:#333;font-weight:normal;font-family:'Liberation Sans';">the receive DUT, this will be equal to</div>
<div class="t" style="left:242.14px;top:563.00px;font-size:6.4px;color:#333;font-weight:normal;font-family:'Liberation Sans';">SamplesPerFrame/BasebandSampleRate.</div>
<div class="a" style="left:400px;top:756px;width:122px;height:82px;background:#00d2d2;border:2px solid #ff3ccc"></div>
<svg style="left:0;top:0" width="1" height="1"><path d="M396.8 773.2 L400.5 777.5 L396.8 781.6 M396.8 813.3 L400.5 817.5 L396.8 821.6" fill="none" stroke="#ff3ccc" stroke-width="1.8"/></svg>
<div class="t" style="left:403.81px;top:774.00px;font-size:7.2px;color:#000;font-weight:normal;font-family:'Liberation Sans';transform:scaleX(0.9879);transform-origin:0 0;">TxTransmitPeriod</div>
<div class="t" style="left:403.81px;top:814.00px;font-size:7.2px;color:#000;font-weight:normal;font-family:'Liberation Sans';transform:scaleX(0.9875);transform-origin:0 0;">Threshold</div>
<div class="t" style="left:439.88px;top:789.00px;font-size:8px;color:#ff38e0;font-weight:normal;font-family:'Liberation Sans';transform:scaleX(1.0186);transform-origin:0 0;">Xilinx Zynq</div>
<div class="t" style="left:437.68px;top:799.00px;font-size:8px;color:#ff38e0;font-weight:normal;font-family:'Liberation Sans';transform:scaleX(1.0086);transform-origin:0 0;">AXI Interface</div>
<svg style="left:0;top:0" width="1" height="1">
  <path d="M407 824 H411 V829.5 H414.2 L409 835 L403.8 829.5 H407 Z" fill="none" stroke="#50dede" stroke-width="2.2" stroke-linejoin="round"/>
  <path d="M404 829.5 H414 L409 834.8 Z" fill="#2aa6a6"/>
  <rect x="407.2" y="824.2" width="3.6" height="5.6" fill="#48b4d4" stroke="#1a8c8c" stroke-width="0.7"/>
</svg>
</body></html>
